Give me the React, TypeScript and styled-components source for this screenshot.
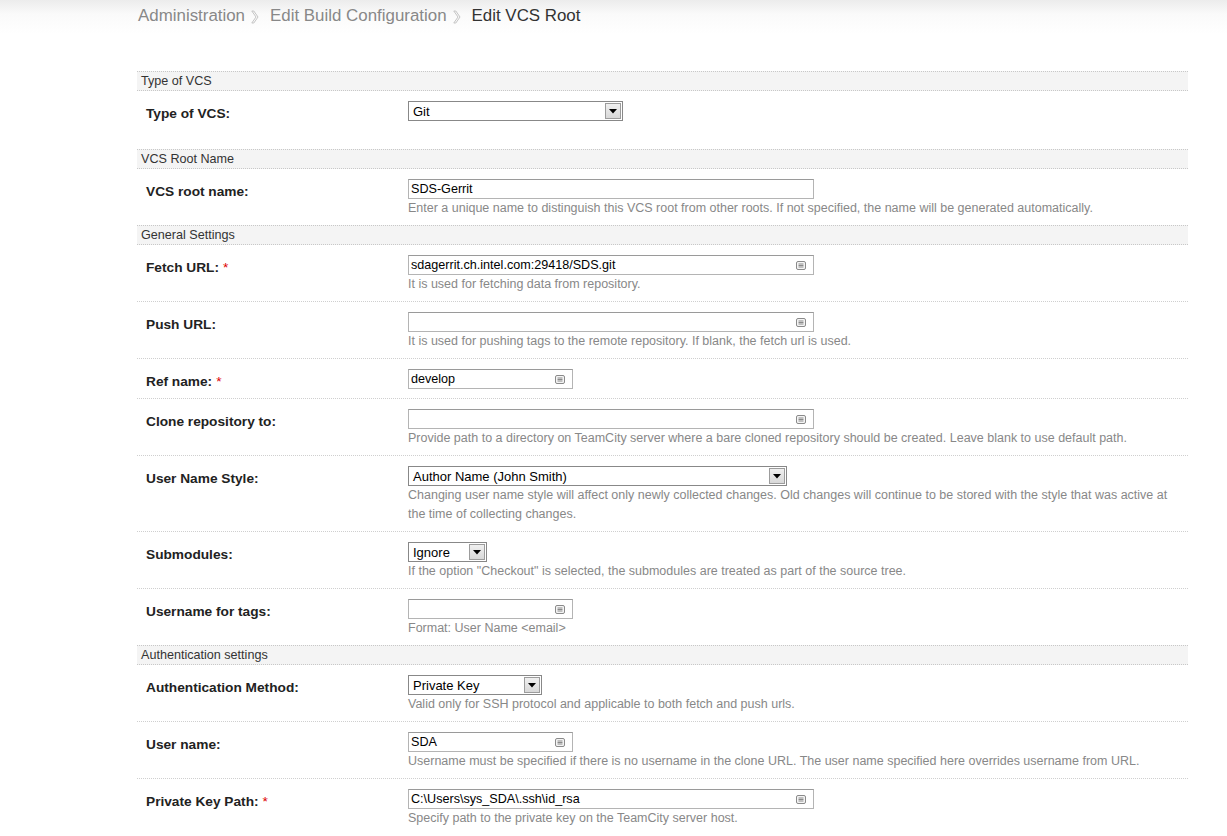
import styled, { createGlobalStyle } from "styled-components";

const GlobalStyle = createGlobalStyle`
  html, body {
    margin: 0;
    padding: 0;
    background: #fff;
  }
  body {
    font-family: "Liberation Sans", Arial, sans-serif;
    font-size: 12px;
    color: #000;
  }
`;

const Header = styled.div`
  height: 32px;
  background: linear-gradient(#ececec 0px, #fafafa 14px, #fff 34px);
  padding: 0 0 2px 138px;
  display: flex;
  align-items: center;
  font-size: 16.9px;
`;

const Crumb = styled.span<{ $current?: boolean }>`
  color: ${(p) => (p.$current ? "#333" : "#888")};
`;

const Sep = styled.span`
  display: flex;
  margin: 1px 11px 0 6px;
`;

const Content = styled.div`
  margin: 37px 39px 0 137px;
`;

const SectionTitle = styled.div`
  background: #f4f4f4;
  border-top: 1px dotted #c8c8c8;
  border-bottom: 1px dotted #c8c8c8;
  height: 18px;
  line-height: 19px;
  padding-left: 4px;
  color: #333;
  font-size: 12.6px;
`;

const Row = styled.div<{ $last?: boolean; $tall?: boolean }>`
  display: grid;
  grid-template-columns: 271px 1fr;
  padding: 10px 0 7px;
  min-height: ${(p) => (p.$tall ? "41px" : "auto")};
  border-bottom: ${(p) => (p.$last ? "none" : "1px dotted #cfcfcf")};
`;

const Label = styled.div`
  padding: 5px 0 0 9px;
  font-weight: bold;
  font-size: 13.7px;
  color: #222;
`;

const Star = styled.span`
  color: #d00;
  font-weight: normal;
  margin-left: 4px;
`;

const Field = styled.div<{ $bare?: boolean }>`
  display: flex;
  flex-direction: column;
  align-items: flex-start;
  padding-bottom: ${(p) => (p.$bare ? "2px" : "0")};
`;

const InputBox = styled.div<{ $w: number }>`
  width: ${(p) => p.$w}px;
  height: 20px;
  box-sizing: border-box;
  border: 1px solid #b4b4b4;
  border-top-color: #9a9a9a;
  display: flex;
  align-items: center;
  justify-content: space-between;
  padding: 0 7px 0 2px;
  font-size: 12.6px;
  color: #000;
  background: #fff;
`;

const SelectBox = styled.div<{ $w: number }>`
  width: ${(p) => p.$w}px;
  height: 20px;
  box-sizing: border-box;
  border: 1px solid #888;
  display: flex;
  align-items: center;
  justify-content: space-between;
  padding: 1px 1px 1px 4px;
  font-size: 13px;
  color: #000;
  background: #fff;
`;

const DropButton = styled.div`
  width: 16px;
  height: 16px;
  box-sizing: border-box;
  border: 1px solid #9c9c9c;
  background: linear-gradient(#f0f0f0, #d8d8d8);
  display: flex;
  align-items: center;
  justify-content: center;
`;

const Hint = styled.div`
  color: #888;
  font-size: 12.5px;
  line-height: 19px;
`;

function Chevron() {
  return (
    <svg width="8" height="14" viewBox="0 0 8 14">
      <path
        d="M0.8 1 L5 7 L0.8 13 L2.8 13 L7 7 L2.8 1 Z"
        fill="none"
        stroke="#c4c4c4"
        strokeWidth="1"
        strokeLinejoin="round"
      />
    </svg>
  );
}

function ParamIcon() {
  return (
    <svg width="10" height="9" viewBox="0 0 10 9">
      <rect x="0.5" y="0.5" width="9" height="8" rx="1.5" fill="#f4f4f4" stroke="#8a8a8a" />
      <path d="M2.5 3h5M2.5 4.5h5M2.5 6h5" stroke="#8a8a8a" strokeWidth="1" />
    </svg>
  );
}

function Arrow() {
  return (
    <svg width="8" height="5" viewBox="0 0 8 5">
      <path d="M0 0h8L4 4.5z" fill="#000" />
    </svg>
  );
}

type FieldSpec = {
  label: string;
  required?: boolean;
  kind: "input" | "select" | "plain";
  value: string;
  width: number;
  hint?: string[];
};

type Section = { title: string; fields: FieldSpec[]; tall?: boolean };

const sections: Section[] = [
  {
    title: "Type of VCS",
    tall: true,
    fields: [{ label: "Type of VCS:", kind: "select", value: "Git", width: 215 }],
  },
  {
    title: "VCS Root Name",
    fields: [
      {
        label: "VCS root name:",
        kind: "plain",
        value: "SDS-Gerrit",
        width: 406,
        hint: [
          "Enter a unique name to distinguish this VCS root from other roots. If not specified, the name will be generated automatically.",
        ],
      },
    ],
  },
  {
    title: "General Settings",
    fields: [
      {
        label: "Fetch URL:",
        required: true,
        kind: "input",
        value: "sdagerrit.ch.intel.com:29418/SDS.git",
        width: 406,
        hint: ["It is used for fetching data from repository."],
      },
      {
        label: "Push URL:",
        kind: "input",
        value: "",
        width: 406,
        hint: ["It is used for pushing tags to the remote repository. If blank, the fetch url is used."],
      },
      { label: "Ref name:", required: true, kind: "input", value: "develop", width: 165 },
      {
        label: "Clone repository to:",
        kind: "input",
        value: "",
        width: 406,
        hint: [
          "Provide path to a directory on TeamCity server where a bare cloned repository should be created. Leave blank to use default path.",
        ],
      },
      {
        label: "User Name Style:",
        kind: "select",
        value: "Author Name (John Smith)",
        width: 379,
        hint: [
          "Changing user name style will affect only newly collected changes. Old changes will continue to be stored with the style that was active at",
          "the time of collecting changes.",
        ],
      },
      {
        label: "Submodules:",
        kind: "select",
        value: "Ignore",
        width: 79,
        hint: ['If the option "Checkout" is selected, the submodules are treated as part of the source tree.'],
      },
      {
        label: "Username for tags:",
        kind: "input",
        value: "",
        width: 165,
        hint: ["Format: User Name <email>"],
      },
    ],
  },
  {
    title: "Authentication settings",
    fields: [
      {
        label: "Authentication Method:",
        kind: "select",
        value: "Private Key",
        width: 134,
        hint: ["Valid only for SSH protocol and applicable to both fetch and push urls."],
      },
      {
        label: "User name:",
        kind: "input",
        value: "SDA",
        width: 165,
        hint: [
          "Username must be specified if there is no username in the clone URL. The user name specified here overrides username from URL.",
        ],
      },
      {
        label: "Private Key Path:",
        required: true,
        kind: "input",
        value: "C:\\Users\\sys_SDA\\.ssh\\id_rsa",
        width: 406,
        hint: ["Specify path to the private key on the TeamCity server host."],
      },
    ],
  },
];

function Control({ f }: { f: FieldSpec }) {
  if (f.kind === "select") {
    return (
      <SelectBox $w={f.width}>
        <span>{f.value}</span>
        <DropButton>
          <Arrow />
        </DropButton>
      </SelectBox>
    );
  }
  return (
    <InputBox $w={f.width}>
      <span>{f.value}</span>
      {f.kind === "input" && <ParamIcon />}
    </InputBox>
  );
}

export default function App() {
  return (
    <>
      <GlobalStyle />
      <Header>
        <Crumb>Administration</Crumb>
        <Sep>
          <Chevron />
        </Sep>
        <Crumb>Edit Build Configuration</Crumb>
        <Sep>
          <Chevron />
        </Sep>
        <Crumb $current>Edit VCS Root</Crumb>
      </Header>
      <Content>
        {sections.map((s) => (
          <div key={s.title}>
            <SectionTitle>{s.title}</SectionTitle>
            {s.fields.map((f, i) => (
              <Row key={f.label} $last={i === s.fields.length - 1} $tall={s.tall}>
                <Label>
                  {f.label}
                  {f.required && <Star>*</Star>}
                </Label>
                <Field $bare={!f.hint}>
                  <Control f={f} />
                  {f.hint?.map((h) => (
                    <Hint key={h}>{h}</Hint>
                  ))}
                </Field>
              </Row>
            ))}
          </div>
        ))}
      </Content>
    </>
  );
}
